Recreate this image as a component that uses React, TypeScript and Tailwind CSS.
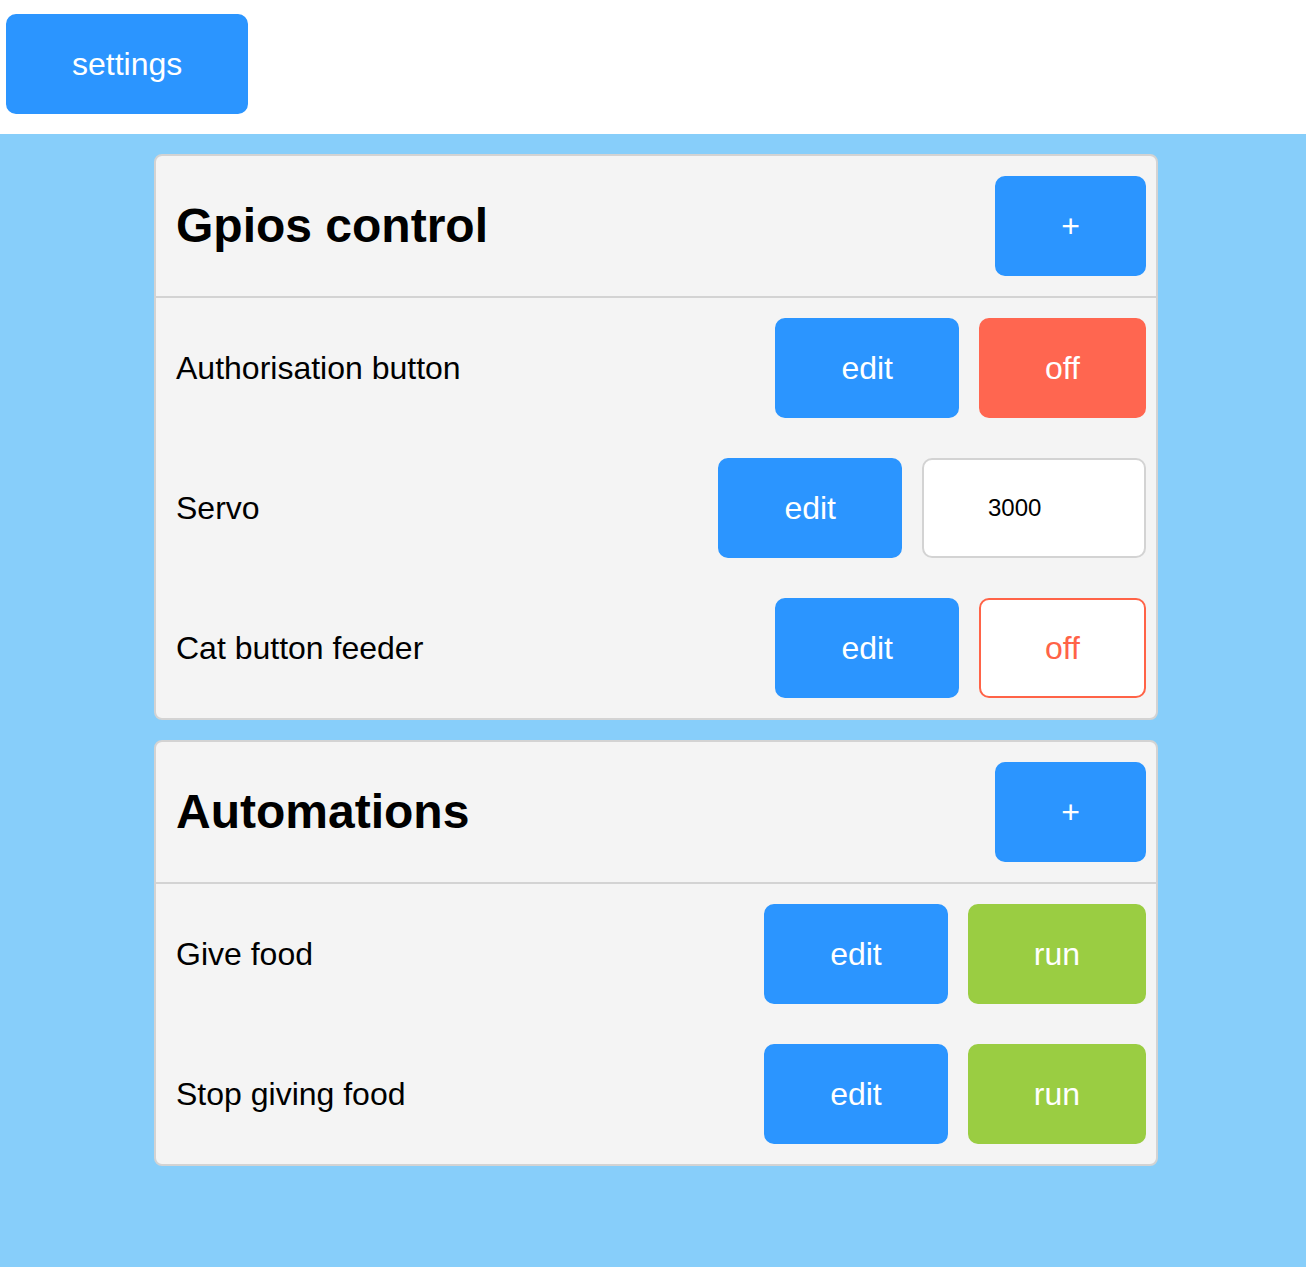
import { useState } from 'react'

const btn =
  'h-[100px] px-16 border-2 rounded-[10px] text-[32px] leading-none shrink-0 cursor-pointer'
const blueBtn = `${btn} bg-[#2b95ff] border-[#2b95ff] text-white`

interface Gpio {
  id: number
  label: string
  kind: 'switch' | 'value'
  on?: boolean
  value?: string
  outline?: boolean
}

const gpios: Gpio[] = [
  { id: 1, label: 'Authorisation button', kind: 'switch', on: false },
  { id: 2, label: 'Servo', kind: 'value', value: '3000' },
  { id: 3, label: 'Cat button feeder', kind: 'switch', on: false, outline: true },
]

const automations = [
  { id: 1, label: 'Give food' },
  { id: 2, label: 'Stop giving food' },
]

function Card({ title, children }: { title: string; children: React.ReactNode }) {
  return (
    <div className="w-[1004px] ml-[154px] bg-[#f4f4f4] border-2 border-[#d3d3d3] rounded-lg">
      <div className="flex items-center justify-between pl-5 pr-[10px] py-5 border-b-2 border-[#d3d3d3]">
        <h2 className="text-[48px] font-bold leading-none">{title}</h2>
        <button className={blueBtn}>+</button>
      </div>
      {children}
    </div>
  )
}

function Row({ label, children }: { label: string; children: React.ReactNode }) {
  return (
    <div className="flex items-center pl-5 pr-[10px] py-5">
      <span className="text-[32px] leading-none flex-1">{label}</span>
      <div className="flex gap-5">{children}</div>
    </div>
  )
}

export default function App() {
  const [servo, setServo] = useState('3000')

  return (
    <div className="min-h-[1267px] flex flex-col font-['Liberation_Sans',Arial,sans-serif] text-black">
      <div className="bg-white pt-[14px] pb-5 pl-[6px]">
        <button className={blueBtn}>settings</button>
      </div>
      <div className="flex-1 bg-[#87cefa] pt-5 pb-10 flex flex-col gap-5">
        <Card title="Gpios control">
          {gpios.map((g) => (
            <Row key={g.id} label={g.label}>
              <button className={blueBtn}>edit</button>
              {g.kind === 'value' ? (
                <input
                  value={servo}
                  onChange={(e) => setServo(e.target.value)}
                  className="w-[224px] h-[100px] pl-16 border-2 border-[#d3d3d3] rounded-[10px] bg-white text-[24px] outline-none"
                />
              ) : g.outline ? (
                <button className={`${btn} bg-white border-[#ff6347] text-[#ff6347]`}>off</button>
              ) : (
                <button className={`${btn} bg-[#ff6650] border-[#ff6650] text-white`}>off</button>
              )}
            </Row>
          ))}
        </Card>
        <Card title="Automations">
          {automations.map((a) => (
            <Row key={a.id} label={a.label}>
              <button className={blueBtn}>edit</button>
              <button className={`${btn} bg-[#9acd42] border-[#9acd42] text-white`}>run</button>
            </Row>
          ))}
        </Card>
      </div>
    </div>
  )
}
